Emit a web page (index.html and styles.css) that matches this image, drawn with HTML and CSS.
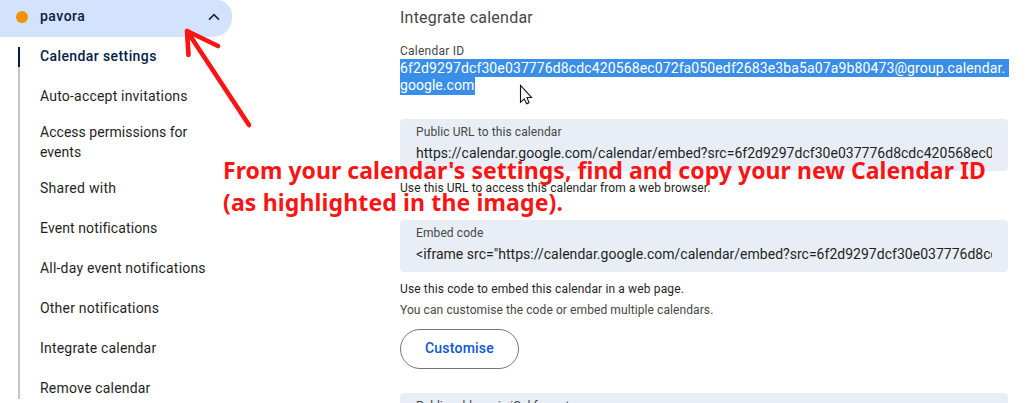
FILE: index.html
```
<!DOCTYPE html>
<html lang="en">
<head>
<meta charset="utf-8">
<title>Calendar settings</title>
<link rel="stylesheet" href="styles.css">
</head>
<body>
<div class="page">
  <aside class="sidebar">
    <div class="calendar-header">
      <span class="dot"></span>
      <span class="calendar-name"><span>pavora</span></span>
      <svg class="chevron" width="12" height="8" viewBox="0 0 12 8"><path d="M1 6.7 6 1.7l5 5" fill="none" stroke="#1b2548" stroke-width="1.7"/></svg>
    </div>
    <nav class="menu">
      <a class="item active"><span class="t1">Calendar settings</span></a>
      <a class="item"><span class="t2">Auto-accept invitations</span></a>
      <a class="item"><span class="t3">Access permissions for<br>events</span></a>
      <a class="item"><span class="t4">Shared with</span></a>
      <a class="item"><span class="t5">Event notifications</span></a>
      <a class="item"><span class="t6">All-day event notifications</span></a>
      <a class="item"><span class="t7">Other notifications</span></a>
      <a class="item"><span class="t8">Integrate calendar</span></a>
      <a class="item"><span class="t9">Remove calendar</span></a>
    </nav>
  </aside>
  <main class="content">
    <h1 class="title"><span>Integrate calendar</span></h1>
    <div class="id-label"><span>Calendar ID</span></div>
    <div class="id-value"><span class="line first">6f2d9297dcf30e037776d8cdc420568ec072fa050edf2683e3ba5a07a9b80473@group.calendar.</span><span class="line second">google.com</span></div>
    <div class="field">
      <div class="field-label public"><span>Public URL to this calendar</span></div>
      <div class="field-value url"><span>https://calendar.google.com/calendar/embed?src=6f2d9297dcf30e037776d8cdc420568ec072fa050edf</span></div>
    </div>
    <p class="hint url-hint"><span>Use this URL to access this calendar from a web browser.</span></p>
    <div class="field">
      <div class="field-label embed"><span>Embed code</span></div>
      <div class="field-value code"><span>&lt;iframe src="https://calendar.google.com/calendar/embed?src=6f2d9297dcf30e037776d8cdc420568ec072fa</span></div>
    </div>
    <p class="hint embed-hint"><span>Use this code to embed this calendar in a web page.</span></p>
    <p class="hint muted"><span>You can customise the code or embed multiple calendars.</span></p>
    <button class="customise"><span>Customise</span></button>
    <div class="field">
      <div class="field-label ical"><span>Public address in iCal format</span></div>
    </div>
  </main>
  <div class="note"><div class="n1">From your calendar's settings, find and copy your new Calendar ID</div><div class="n2">(as highlighted in the image).</div></div>
  <svg class="arrow" width="80" height="110" viewBox="180 20 80 110"><path d="M249 125 187 31M188.500 55 187 31 218 46" fill="none" stroke="#fa1414" stroke-width="4.600" stroke-linecap="round" stroke-linejoin="round"/></svg>
  <svg class="cursor" width="16" height="22" viewBox="0 0 16 22"><path d="M1.500 1.500V18.300L5.200 14.800 7.600 19.700 10 18.600 8 13.500H12.500Z" fill="#fff" stroke="#111" stroke-width="1.100"/></svg>
</div>
</body>
</html>
```
FILE: styles.css
```
body {
  margin: 0;
  background: #fff;
  color: #1f1f1f;
  font-family: Roboto, "Liberation Sans", sans-serif;
}
.page {
  position: relative;
  display: flex;
  width: 1032px;
  height: 403px;
  overflow: hidden;
}
.sidebar { width: 400px; flex: none; }
.calendar-header {
  display: flex;
  align-items: center;
  box-sizing: border-box;
  width: 232px;
  height: 37px;
  padding: 0 12px 4px 16px;
  background: #d3e3fd;
  border-radius: 0 15px 19px 0;
  color: #041e49;
  font-size: 14px;
  font-weight: 500;
  letter-spacing: 0.5px;
}
.dot { width: 12px; height: 12px; margin-right: 12px; border-radius: 50%; background: #f09300; }
.calendar-name { flex: 1; margin-top: -1px; }
.menu {
  display: flex;
  flex-direction: column;
  margin-top: -1px;
  font-size: 14px;
  line-height: 20px;
  letter-spacing: 0.2px;
}
.item {
  display: flex;
  flex: none;
  align-items: center;
  box-sizing: border-box;
  min-height: 40px;
  margin-left: 18px;
  padding: 6px 0 6px 20px;
  border-left: 2px solid #c4c7c5;
}
.item:last-child { align-items: flex-start; height: 31px; min-height: 0; padding-top: 10px; padding-bottom: 0; }
.item.active { height: 20px; min-height: 0; margin-top: 11px; padding-top: 0; padding-bottom: 2px; border-color: #041e49; color: #041e49; font-weight: 500; }
.item.active + .item { min-height: 49px; padding-top: 15px; }
.t1 { letter-spacing: 0.4px; }
.t3 { letter-spacing: 0.03px; }
.t4 { letter-spacing: 0.28px; }
.t5 { letter-spacing: 0.1px; }
.content { width: 608px; flex: none; }
.title { margin: 8px 0 0; height: 20px; font-size: 16px; line-height: 20px; font-weight: 400; letter-spacing: 0.23px; color: #444746; }
.id-label { height: 16px; margin-top: 15px; font-size: 12px; line-height: 16px; letter-spacing: 0.25px; color: #444746; }
.id-value { display: flex; flex-direction: column; align-items: flex-start; color: #fff; font-size: 14px; line-height: 18px; white-space: nowrap; }
.line { height: 18px; background: #398ee7; }
.first { width: 609px; letter-spacing: 0.12px; }
.second { width: 75px; letter-spacing: 0.05px; line-height: 17px; }
.field { box-sizing: border-box; height: 52px; margin-top: 24px; padding: 5px 16px 0; border-radius: 4px; background: #e9eef6; }
.field-label { height: 16px; font-size: 12px; line-height: 16px; letter-spacing: 0.1px; color: #444746; }
.ical { letter-spacing: 0; }
.field-value { height: 24px; overflow: hidden; font-size: 14px; line-height: 26px; white-space: nowrap; }
.url { letter-spacing: 0.02px; }
.code { letter-spacing: 0.02px; }
.hint { height: 16px; margin: 9px 0 0; font-size: 12px; line-height: 16px; letter-spacing: 0.09px; }
.embed-hint { letter-spacing: 0.14px; }
.muted { margin-top: 5px; color: #444746; }
.customise {
  display: block;
  box-sizing: border-box;
  width: 119px;
  height: 40px;
  margin: 11px 0 0;
  padding: 0 0 2px;
  border: 1px solid #747775;
  border-radius: 20px;
  background: #fff;
  color: #0b57d0;
  font: 500 14px Roboto, sans-serif;
  letter-spacing: 0.22px;
}
.note { position: absolute; left: 223px; top: 154px; color: #fa1414; font: 700 23px/32px "Noto Sans", sans-serif; letter-spacing: 0.04px; white-space: nowrap; }
.n2 { letter-spacing: 0.14px; }
.arrow { position: absolute; left: 180px; top: 20px; }
.cursor { position: absolute; left: 519px; top: 84px; }
```
